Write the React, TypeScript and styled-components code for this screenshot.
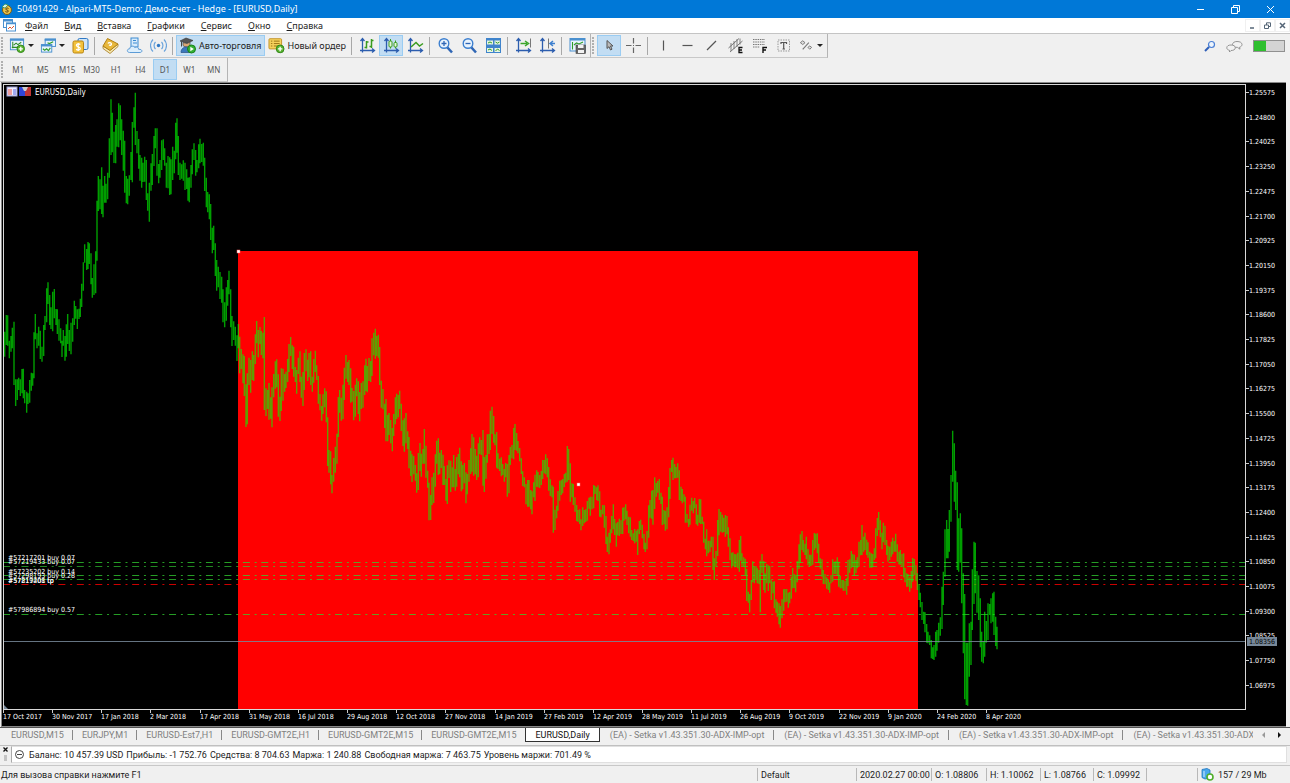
import React from 'react';
import styled, { createGlobalStyle, css } from 'styled-components';

const Global = createGlobalStyle`
  *, *::before, *::after { box-sizing: border-box; }
  body { margin: 0; background: #f0f0f0; }
  button, input { font: inherit; color: inherit; }
`;

const uiFont = `'Noto Sans', 'Open Sans', sans-serif`;
const denseFont = `Roboto, 'Noto Sans', sans-serif`;
const chartFont = `'DejaVu Sans Condensed', 'DejaVu Sans', sans-serif`;

const Window = styled.div`
  display: flex;
  flex-direction: column;
  min-height: 100vh;
  overflow: hidden;
  background: #f0f0f0;
  color: #1c1c1c;
  font: 9px/12px ${uiFont};
`;

const TitleBar = styled.header`
  display: flex;
  align-items: center;
  height: 18px;
  padding: 0 2px 0 1px;
  background: #0078d7;
  color: #fff;
`;

const TitleText = styled.h1`
  flex: 1;
  margin: 0 0 0 5px;
  font-size: 9px;
  font-weight: 400;
  white-space: nowrap;
`;

const CaptionButton = styled.button`
  display: grid;
  place-items: center;
  width: 35px;
  height: 18px;
  padding: 0;
  border: 0;
  background: transparent;
`;

const MenuBar = styled.nav`
  display: flex;
  align-items: center;
  height: 16px;
  padding-left: 3px;
  background: #fff;
  border-bottom: 1px solid #c4c4c4;
`;

const MenuItems = styled.div`
  display: flex;
  flex: 1;
  gap: 16px;
  margin-left: 9px;
`;

const MenuButton = styled.button`
  padding: 0;
  border: 0;
  background: transparent;
  white-space: nowrap;
  &::first-letter { text-decoration: underline; }
`;

const DocButton = styled.button`
  display: grid;
  place-items: center;
  width: 15px;
  height: 13px;
  padding: 0;
  border: 1px solid #f0f0f0;
  background: #fff;
`;

const ToolRow = styled.div`
  display: flex;
  align-items: stretch;
  height: 24px;
`;

const ToolGroup = styled.div`
  display: flex;
  align-items: center;
  height: 24px;
  padding-right: 1px;
  border-right: 1px solid #b4b4b4;
  border-bottom: 1px solid #c8c8c8;
`;

const Grip = styled.span`
  width: 6px;
  height: 18px;
  background: radial-gradient(circle at 2px 1px, #b0b0b0 1px, transparent 1px) 0 0 / 6px 3px;
`;

const Divider = styled.span`
  width: 1px;
  height: 18px;
  margin: 0 3px 0 2px;
  background: #a8a8a8;
`;

const activeLook = css`
  background: #c2ddf3;
  border-color: #9accf2;
`;

const ToolButton = styled.button<{ $active?: boolean; $width?: number }>`
  display: flex;
  align-items: center;
  justify-content: ${p => (p.$width ? 'flex-start' : 'center')};
  gap: 3px;
  width: ${p => p.$width ?? 24}px;
  height: 21px;
  padding: 0 2px;
  border: 1px solid transparent;
  background: transparent;
  white-space: nowrap;
  ${p => p.$active && activeLook}
`;

const Caret = styled.span`
  border: 3px solid transparent;
  border-top-color: #222;
  border-bottom: 0;
`;

const RightTools = styled.div`
  display: flex;
  align-items: center;
  gap: 10px;
  margin-left: auto;
  padding-right: 5px;
`;

const IconOnly = styled.button`
  display: grid;
  place-items: center;
  padding: 0;
  border: 0;
  background: transparent;
`;

const Meter = styled.div`
  width: 32px;
  height: 12px;
  border: 1px solid #909090;
  background: linear-gradient(90deg, #2ebf2e 40%, #d4d4d4 40%);
`;

const PeriodGroup = styled.div`
  display: grid;
  grid-template-columns: repeat(9, 1fr);
  width: 220px;
`;

const PeriodButton = styled.button<{ $active?: boolean }>`
  height: 21px;
  padding: 0;
  border: 1px solid transparent;
  background: transparent;
  color: #555;
  font: 8px/10px ${uiFont};
  ${p => p.$active && activeLook}
`;

const ChartPane = styled.main`
  display: grid;
  flex: 1;
  grid-template-columns: 1fr 40px;
  grid-template-rows: 1fr 16px;
  margin: 0 4px 0 1px;
  min-height: 645px;
  border: 1px solid #888;
  border-right: 0;
  background: #000;
  padding: 1px 0 0 1px;
`;

const Plot = styled.div`
  display: grid;
  min-width: 0;
  border: 1px solid #d8d8d8;
`;

const Drawing = styled.svg`
  display: block;
  width: 100%;
  height: 100%;
  min-width: 0;
  font: 7px ${chartFont};
`;

const TabStrip = styled.div`
  display: flex;
  align-items: stretch;
  height: 19px;
  border-top: 1px solid #555;
  border-bottom: 1px solid #c0c0c0;
`;

const Tabs = styled.div`
  display: flex;
  flex: 1;
  align-items: flex-start;
  min-width: 0;
  overflow: hidden;
  padding-left: 2px;
`;

const Tab = styled.button<{ $active?: boolean; $rule?: boolean; $roomy?: boolean }>`
  position: relative;
  flex: none;
  height: 14px;
  padding: 0 ${p => (p.$roomy ? 9 : 8)}px;
  border: 1px solid transparent;
  border-top: 0;
  background: transparent;
  color: #808080;
  font-family: ${denseFont};
  line-height: 14px;
  white-space: nowrap;
  ${p => p.$rule && css`
    &::after {
      content: '';
      position: absolute;
      right: -1px;
      top: 2px;
      height: 10px;
      border-right: 1px solid #888;
    }
  `}
  ${p => p.$active && css`
    border-color: #333;
    background: #fff;
    color: #111;
  `}
`;

const TabArrows = styled.div`
  display: flex;
  align-items: center;
  gap: 13px;
  padding: 0 9px 3px;
`;

const Arrow = styled.button<{ $back?: boolean }>`
  width: 0;
  height: 0;
  padding: 0;
  border: 3px solid transparent;
  background: transparent;
  ${p => (p.$back
    ? css`border-left-width: 0; border-right-color: #999;`
    : css`border-right-width: 0; border-left-color: #111;`)}
`;

const AccountRow = styled.section`
  display: flex;
  height: 20px;
  padding-right: 3px;
  border-bottom: 1px solid #c8c8c8;
`;

const AccountSide = styled.div`
  display: flex;
  flex-direction: column;
  align-items: center;
  gap: 3px;
  width: 11px;
  padding-top: 1px;
`;

const SideGrip = styled.span`
  width: 3px;
  height: 6px;
  background: #c4c4c4;
`;

const AccountLine = styled.p`
  display: flex;
  flex: 1;
  align-items: center;
  gap: 5px;
  height: 17px;
  margin: 0;
  padding: 0 3px;
  border: 1px solid #e0e0e0;
  border-left-color: #aaa;
  background: #fff;
  font-family: ${denseFont};
  white-space: nowrap;
`;

const Figures = styled.span`
  display: flex;
  gap: 3px;
`;

const StatusBar = styled.footer`
  display: flex;
  align-items: center;
  height: 17px;
  font-family: ${denseFont};
`;

const StatusHint = styled.span`
  flex: 1;
  padding-left: 1px;
`;

const StatusCell = styled.span<{ $width: number }>`
  display: flex;
  align-items: center;
  gap: 4px;
  width: ${p => p.$width}px;
  height: 13px;
  padding-left: 3px;
  border-left: 1px solid #b8b8b8;
  white-space: nowrap;
`;

/* ---------- icons ---------- */

const Icon = ({ children, w = 17 }: { children: React.ReactNode; w?: number }) => (
  <svg width={w} height={17} viewBox={`0 0 ${w} 17`} fill="none" aria-hidden>{children}</svg>
);

const Plus = ({ x, y }: { x: number; y: number }) => (
  <g>
    <circle cx={x} cy={y} r="4" fill="#5cb531" stroke="#2f8418" />
    <path d={`M${x - 2.3} ${y}h4.6M${x} ${y - 2.3}v4.6`} stroke="#fff" strokeWidth="1.4" />
  </g>
);

const Axes = () => (
  <path d="M3.5 1.5v14M1 13.5h14M1.500 4l2-2.500 2 2.500M13 11.500l2.500 2-2.500 2" stroke="#2c5dae" strokeWidth="1.300" />
);

const icons = {
  newChart: (
    <Icon>
      <rect x="1.500" y="1.500" width="14" height="11.500" fill="#e9f4fd" stroke="#4a90cf" />
      <path d="M1 2.500h15" stroke="#4a90cf" strokeWidth="2" />
      <path d="M4 4.500v7M3 10.500h9M5 8l2.500-2 2 1.500L13 5" stroke="#2f8c2a" strokeWidth="1.100" />
      <Plus x={12.5} y={12} />
    </Icon>
  ),
  profiles: (
    <Icon>
      <rect x="5.500" y="1.500" width="11" height="8" fill="#e9f4fd" stroke="#4a90cf" />
      <path d="M5 2.500h12" stroke="#4a90cf" strokeWidth="2" />
      <rect x="1.500" y="7.500" width="11" height="8" fill="#e9f4fd" stroke="#4a90cf" />
      <path d="M1 8.500h12" stroke="#4a90cf" strokeWidth="2" />
      <path d="M3 12l2 1.500L7 12l2 2 2-3M8 5.500l2 1 4-2" stroke="#2f9c2a" strokeWidth="1.200" />
    </Icon>
  ),
  symbols: (
    <Icon>
      <rect x="6" y="1.500" width="10" height="11" rx="1.500" fill="#cfe5f8" stroke="#2f78c4" />
      <rect x="1" y="4" width="10.500" height="12" rx="1.500" fill="#f2c13c" stroke="#b98512" />
      <path d="M8.300 7.500c-1-1-4-1-4 .8s4 1.400 4 3.200-3 1.800-4.200.7M6.200 6v8" stroke="#fff" strokeWidth="1.200" />
    </Icon>
  ),
  book: (
    <Icon>
      <path d="M1 9v2.500l7 5L16 9.500V7l-8 6z" fill="#f7e9b4" stroke="#a4791a" strokeWidth=".8" />
      <path d="M1 9L5.500 1.500 16 7l-8 6.500z" fill="#e8b83c" stroke="#b07f14" />
      <path d="M6 6.500c.8-1.500 3-1 3.400.2s-1 2-2.400 1.300" stroke="#fff" strokeWidth="1.300" />
    </Icon>
  ),
  cloud: (
    <Icon>
      <rect x="5" y="1" width="7" height="9" fill="#d7ebfb" stroke="#3c8bd2" />
      <path d="M7 3.500h3M7 6h4" stroke="#3c8bd2" />
      <path d="M3.500 15.500c-3-.3-2.800-3.700.2-3.700.3-3 4-3.500 5-1.300 2-1.200 4 .1 3.900 1.800 4-.3 4.200 2.900 1.500 3.200z" fill="#dceefc" stroke="#5c9bd6" />
    </Icon>
  ),
  signal: (
    <Icon>
      <circle cx="8.500" cy="8.500" r="1.700" fill="#2f78c4" />
      <path d="M5.500 5a5 5 0 000 7M11.500 5a5 5 0 010 7M3 2.500a8.500 8.500 0 000 12M14 2.500a8.500 8.500 0 010 12" stroke="#6ba4dc" strokeWidth="1.200" />
    </Icon>
  ),
  auto: (
    <Icon>
      <path d="M1 4l6-3 7 2.500L8 6.500z" fill="#555" stroke="#333" strokeWidth=".6" />
      <path d="M4 5.500v3c2 2 6 2 7-.5V5L8 6.500z" fill="#dca874" stroke="#444" strokeWidth=".7" />
      <path d="M2 15.500c0-4 3-5.500 5-5.500s5 1 5.500 5.500z" fill="#3b78bd" stroke="#284f85" strokeWidth=".7" />
      <path d="M2.500 4.500v5" stroke="#444" />
      <circle cx="12.500" cy="12" r="4" fill="#35b035" stroke="#17821a" />
      <path d="M11.300 9.700v4.600l3.500-2.300z" fill="#fff" />
    </Icon>
  ),
  order: (
    <Icon>
      <rect x="1" y="1.500" width="13" height="10.500" rx="1" fill="#f6d25c" stroke="#c4952a" />
      <path d="M3 4h1.500M6 4h6M3 6.500h1.500M6 6.500h6M3 9h1.500M6 9h4" stroke="#9a7415" />
      <Plus x={12.5} y={12} />
    </Icon>
  ),
  bars: <Icon><Axes /><path d="M7.500 4v7.500M5.500 10.500h2M7.500 5h2M12.500 2v9M10.500 9.500h2M12.500 3.500h2" stroke="#3a9c1f" strokeWidth="1.500" /></Icon>,
  candles: (
    <Icon><Axes /><path d="M7.500 2v9.500M12.500 3.500v8" stroke="#3a9c1f" />
      <rect x="6" y="4" width="3" height="6" rx="1" fill="#e6f7dc" stroke="#3a9c1f" /><rect x="11" y="5.500" width="3" height="4.500" rx="1" fill="#e6f7dc" stroke="#3a9c1f" /></Icon>
  ),
  line: <Icon><Axes /><path d="M4 10l5-4.500L12.500 9 16 6.500" stroke="#3a9c1f" strokeWidth="1.500" /></Icon>,
  zoomIn: (
    <Icon><path d="M10 10l5 5.500" stroke="#2f66b5" strokeWidth="2.600" /><circle cx="7" cy="6.500" r="4.800" fill="#e8f3fd" stroke="#3c7fcf" strokeWidth="1.400" />
      <path d="M4.500 6.500h5M7 4v5" stroke="#2f66b5" strokeWidth="1.300" /></Icon>
  ),
  zoomOut: (
    <Icon><path d="M10 10l5 5.500" stroke="#2f66b5" strokeWidth="2.600" /><circle cx="7" cy="6.500" r="4.800" fill="#e8f3fd" stroke="#3c7fcf" strokeWidth="1.400" />
      <path d="M4.500 6.500h5" stroke="#2f66b5" strokeWidth="1.300" /></Icon>
  ),
  tile: (
    <Icon>
      <rect x="1" y="1" width="15" height="15" fill="#3f84cc" />
      <path d="M2 3.500h6v4H2zM9.500 3.500h5.500v4H9.500zM2 11h6v4H2zM9.500 11h5.500v4H9.500z" fill="#e8f6e0" />
      <path d="M3 6l2-1 2 1M10.500 5l2 1.200 2-1.200M3 13l2-1 2 1.500M10.500 14l2-2 2 1.500" stroke="#2f9c2a" />
    </Icon>
  ),
  scroll: <Icon><Axes /><path d="M15.500 1.500v9" stroke="#777" /><path d="M5.500 6.500H12M10 4l3.500 2.500L10 9" stroke="#3aa52a" strokeWidth="1.500" /></Icon>,
  shift: <Icon><Axes /><path d="M9.500 1.500v10" stroke="#777" /><path d="M16 6.500h-4M14 4l-3 2.500L14 9" stroke="#3c7fcf" strokeWidth="1.500" /></Icon>,
  template: (
    <Icon>
      <rect x="1" y="1.500" width="15" height="12.500" fill="#e9f4fd" stroke="#4a90cf" /><path d="M1 2.500h15" stroke="#4a90cf" strokeWidth="2" />
      <path d="M3.500 5v7.500M5 8l2.500-2L10 7l4-2" stroke="#2f9c2a" strokeWidth="1.100" />
      <rect x="7" y="8" width="9.500" height="8.500" fill="#666" stroke="#444" strokeWidth=".6" /><path d="M9 8h5.500v3H9zM9 13h6v3H9z" fill="#f2f2f2" />
    </Icon>
  ),
  cursor: <Icon><path d="M6 3.500v8l2-1.800 1.500 3.300 1.500-.8-1.500-3.200h2.500z" fill="#bbb" stroke="#555" /></Icon>,
  cross: <Icon><path d="M8.500 1v5.500M8.500 10.500v5.500M1 8.500h5.500M10.500 8.500H16M8 8.500h1" stroke="#666" strokeWidth="1.200" /></Icon>,
  vline: <Icon><path d="M8.500 3.500v10" stroke="#555" strokeWidth="1.200" /></Icon>,
  hline: <Icon><path d="M3.500 8.500h10" stroke="#555" strokeWidth="1.200" /></Icon>,
  trend: <Icon><path d="M4 13l9-9" stroke="#555" strokeWidth="1.200" /></Icon>,
  equi: (
    <Icon><path d="M1.500 11L12 1.500M3 15L15.500 4" stroke="#777" /><path d="M4 6v8M7 4v8M10 2v8M13 1.500v6" stroke="#777" strokeWidth=".9" />
      <path d="M15.500 10.500h-3.500v5h3.500M12 13h3" stroke="#111" strokeWidth="1.300" /></Icon>
  ),
  fibo: (
    <Icon><path d="M2 2.500h12M2 5h12M2 7.500h12M2 10h7" stroke="#777" strokeDasharray="1.500 .8" />
      <path d="M12 16v-5.500h4M12 13h3" stroke="#111" strokeWidth="1.400" /></Icon>
  ),
  text: <Icon><rect x="3" y="3" width="11.500" height="11" stroke="#999" strokeDasharray="1.500 1" /><path d="M6 7V5.500h5.500V7M8.700 5.500v6.500M7.500 12h2.500" stroke="#555" strokeWidth="1.200" /></Icon>,
  shapes: <Icon><path d="M5 12.500l6.500-7" stroke="#777" strokeWidth="1.200" /><path d="M2.500 5.500L5 3.500l2.500 2L5 7.500zM10.500 10.500l2-1.500 2 1.500-2 2z" fill="#ddd" stroke="#777" /></Icon>,
};

const AppLogo = () => (
  <svg width="11" height="12" viewBox="0 0 11 12">
    <circle cx="6" cy="7" r="4.500" fill="#e9c34a" stroke="#7c5c10" />
    <path d="M1 4l3-3 3 1-3 3z" fill="#d9efe0" stroke="#2c8f4c" strokeWidth=".7" />
    <path d="M7.500 5.500c-1-.8-3-.5-2.800.6s2.800.8 2.700 2-2 1.200-3 .4" fill="none" stroke="#5a4108" />
  </svg>
);

const DocLogo = () => (
  <svg width="13" height="13" viewBox="0 0 13 13" fill="none">
    <rect x=".5" y=".5" width="9" height="8" fill="#fff" stroke="#4a90cf" /><path d="M0 1.500h10" stroke="#4a90cf" strokeWidth="2" />
    <rect x="3.500" y="4" width="9" height="8" fill="#fff" stroke="#4a90cf" /><path d="M3 4.500h10" stroke="#4a90cf" strokeWidth="1.500" /><path d="M5 10l2-2 1.500 1.500L11 7" stroke="#e0562c" />
  </svg>
);

const SearchIcon = () => (
  <svg width="12" height="12" viewBox="0 0 12 12" fill="none">
    <path d="M5 7L1 11" stroke="#2f5fb8" strokeWidth="2" /><circle cx="7.500" cy="4.500" r="3" fill="#eef5fd" stroke="#4a7fd4" strokeWidth="1.200" />
  </svg>
);

const ChatIcon = () => (
  <svg width="17" height="13" viewBox="0 0 17 13" fill="#f2f2f2" stroke="#8a8a8a" strokeWidth=".9">
    <path d="M11 1.500c3 0 5 1.200 5 3 0 1.300-1 2.300-2.500 2.700l.5 2-2.500-1.800C8.500 7.500 6.500 6.300 6.500 4.500s2-3 4.500-3z" />
    <path d="M5 5c2.500 0 4.300 1 4.300 2.800S7.500 10.500 5 10.500L3.500 12v-1.700C1.800 10 .8 9 .8 7.800.8 6 2.500 5 5 5z" />
  </svg>
);

const ServerIcon = () => (
  <svg width="13" height="13" viewBox="0 0 13 13">
    <path d="M1 1.500l5-1 3 1.500v8l-5 1-3-1.500z" fill="#4aa8ec" stroke="#1f74bd" strokeWidth=".8" />
    <path d="M3 3l.01 6" stroke="#d2ecff" /><circle cx="9" cy="9" r="3" fill="#fff" stroke="#4fae2a" strokeWidth="1.600" />
  </svg>
);

/* ---------- chart data ---------- */

/* Each run: origin of the run in the plot, then x/high/low triplets at three units per pixel. */
const runs: { ox: number; oy: number; bars: string }[] = [
  {
    ox: -4, oy: -5,
    bars: `14 755 830,19 705 795,23 706 797,28 782 835,33 768 815,37 743 805,42 725 915,47 898 978,52 898 960,56 893 930,61 898 948,66 867 940,70 866 955,74 930 970,80 935 998,84 940 972,89 900 968,94 878 932,98 880 917,102 757 895,106 702 778,111 760 805,116 740 797,121 752 837,126 800 845,131 735 828,135 708 750,140 625 727,144 607 672,149 645 735,153 682 747,158 635 754,163 627 715,168 687 735,172 688 762,177 718 782,182 745 790,186 782 831,190 750 797,195 768 842,199 733 830,203 702 792,208 750 813,213 728 823,218 715 785,223 662 735,227 678 716,232 688 747,237 686 717,241 656 711,245 611 681,250 547 632,254 493 548,260 507 570,264 486 567,268 490 552,273 520 613,277 594 653,282 553 645,287 514 640,291 362 542,295 288 393,300 298 388,305 262 402,309 317 412,314 288 368,318 311 368,323 278 358,328 175 293,333 58 225,337 98 217,342 155 249,347 135 250,351 118 200,356 70 202,361 76 181,365 118 225,370 152 272,374 182 338,379 288 370,383 296 373,388 286 347,393 216 300,397 126 307,402 82 143,406 38 195,411 153 220,416 177 266,420 225 302,425 233 323,429 248 306,434 230 305,439 240 360,443 340 392,448 308 425,453 250 332,457 222 315,462 168 258,466 145 205,471 145 287,476 252 310,480 240 293,485 181 270,490 178 240,494 205 257,499 248 323,504 228 325,509 232 345,513 238 343,518 200 300,523 212 280,527 128 238,531 115 218,535 168 285,540 248 300,545 253 296,550 241 302,555 248 330,560 268 327,564 293 362,568 292 367,573 255 323,577 208 283,582 190 240,587 210 287,591 240 277,596 193 265,600 176 250,605 192 246,610 188 257,614 233 333,619 293 382,623 336 397,628 343 418,632 372 480,637 443 520,641 437 510,646 490 588,650 540 632,655 560 622,660 576 657,665 590 668,669 628 727,674 667 742,679 622 722,683 600 677,687 572 643,692 628 742,696 708 798,701 724 780,706 740 797,711 766 843,715 732 805`,
  },
  {
    ox: 226, oy: 215,
    bars: `29 110 220,34 147 207,39 163 250,43 168 288,48 253 381,52 220 373,57 173 255,62 180 278,67 154 240,71 165 243,76 103 192,80 63 130,85 90 172,90 81 132,94 93 165,99 98 175,103 51 330,108 265 348,113 270 327,117 249 359,122 292 356,126 262 382,131 222 292,136 184 266,140 178 262,145 223 350,150 290 363,154 205 333,159 206 302,164 222 275,168 215 264,173 177 246,177 132 216,182 111 168,187 136 207,191 140 230,196 201 246,200 210 281,205 173 222,210 154 246,214 230 293,219 216 318,223 159 270,228 148 214,233 179 243,237 159 232,242 154 255,247 230 275,251 177 248,256 152 216,260 196 240,265 228 311,270 282 331,275 318 362,279 283 342,284 265 322,289 274 367,293 352 498,297 450 518,302 454 553,306 525 580,311 474 545,316 440 518,321 401 491,325 291 411,329 270 338,334 293 362,339 254 358,343 203 300,348 165 236,353 186 246,357 180 255,362 205 308,366 264 305,371 273 361,376 254 350,380 235 289,385 244 342,389 276 364,394 249 327,399 244 323,404 196 285,408 176 273,412 198 277,417 174 243,422 183 246,426 115 228,431 98 166,436 86 176,440 108 168,445 104 173,449 141 255,454 242 323,459 267 328,464 311 384,468 297 424,473 345 424,477 339 405,482 360 430,487 384 454,491 342 408,496 292 373,500 281 357,505 285 352,509 272 327,514 311 393,519 361 438,523 355 455,528 339 430,533 394 447,537 411 505,542 452 528,546 463 546,551 468 523,556 495 542,560 520 578,565 459 570,570 429 513,574 461 530,579 447 491,583 387 491,588 437 533,593 512 563,597 548 661,602 585 660,606 532 615,611 518 609,616 463 560,620 422 491,625 415 525,629 458 522,634 450 504,639 464 555,643 498 555,648 537 602,652 496 612,657 481 534,662 482 576,667 502 562,671 465 562,676 507 572,680 471 560,685 462 523,689 443 532,694 484 574,698 495 568,703 489 550,708 517 610,712 522 583,717 480 545,722 445 522,726 402 515,731 412 527,736 447 523,740 467 540,745 430 532,749 412 462,754 420 465,759 390 557,763 471 576,768 465 536,772 403 488,777 402 462`,
  },
  {
    ox: 476, oy: 305,
    bars: `31 62 180,36 50 132,41 78 158,45 133 166,50 126 233,54 190 237,59 206 243,64 202 259,68 222 255,73 237 275,77 219 262,82 222 320,87 195 310,91 171 225,96 165 205,101 114 208,105 102 180,110 129 182,114 153 190,119 174 214,124 205 252,128 244 288,133 262 292,138 282 343,143 270 350,147 270 350,152 300 358,156 304 373,161 277 322,165 254 333,170 241 290,174 246 292,179 255 294,184 243 285,188 210 267,193 210 250,197 193 253,202 205 262,206 231 302,211 268 318,216 286 322,220 290 428,225 359 420,230 347 385,234 303 362,239 272 332,244 271 315,248 267 310,253 252 291,257 248 278,262 168 275,266 177 270,271 220 335,276 280 322,280 282 345,285 322 365,290 345 393,294 360 396,299 358 402,303 388 421,308 352 408,313 360 400,317 358 396,322 333 392,327 323 356,331 320 377,336 320 358,341 285 355,345 288 312,350 292 330,354 286 333,359 304 380,363 359 382,368 345 373,373 346 413,378 378 462,382 440 486,387 428 493,391 418 458,395 378 430,400 343 418,404 387 435,409 400 470,413 396 436,418 386 438,423 391 432,428 353 432,432 352 392,437 343 388,441 362 405,446 380 430,451 382 440,455 420 450,460 430 453,464 417 460,469 422 455,473 418 495,478 393 432,482 389 420,487 404 445,492 432 478,496 458 486,501 423 478,506 346 443,510 330 383,515 302 386,519 300 404,524 262 357,529 279 320,533 273 308,538 267 330,543 308 342,547 320 405,552 360 403,556 363 422,561 352 418,566 291 382,570 234 327,575 210 246,579 203 270,584 222 265,588 231 265,593 220 263,598 241 330,603 290 333,607 297 340,612 313 335,616 320 398,621 372 398,626 387 411,630 344 404,635 323 362,640 333 370,644 324 355,649 343 403,653 374 407,658 327 398,662 328 402,667 380 402,671 395 458,676 446 478,680 418 499,685 452 490,690 452 486,694 440 472,699 440 540,703 505 570,708 483 530,713 390 498,717 357 436,722 366 425,727 374 428,731 383 426,736 375 440,741 378 433,745 412 470,750 445 510,755 488 533,759 487 528,764 492 532,768 493 530,773 488 535,778 450 545`,
  },
  {
    ox: 696, oy: 355,
    bars: `122 288 362,126 340 377,131 352 380,136 356 405,140 387 483,145 455 488,149 462 517,154 420 480,158 364 427,163 380 430,168 378 420,172 385 430,177 390 432,181 362 517,186 342 400,191 363 450,195 400 458,200 372 430,205 376 453,209 378 430,214 421 480,219 425 460,223 424 505,228 478 518,232 485 530,237 490 553,241 498 563,246 478 535,251 448 512,255 447 487,260 447 485,265 458 503,269 456 490,274 410 476,278 384 445,283 402 444,287 405 457,292 363 427,297 313 387,301 283 368,306 273 330,310 300 337,315 311 345,319 290 358,324 327 376,329 344 378,333 344 378,338 300 374,343 279 330,347 281 325,352 280 340,356 311 368,361 355 386,366 358 410,370 390 432,375 402 433,380 412 446,385 420 450,389 427 458,393 405 430,398 358 425,403 365 402,407 364 403,412 352 405,416 365 440,421 408 445,426 420 445,430 420 452,435 423 452,440 415 464,444 360 438,449 358 398,454 333 385,458 342 380,463 344 408,468 360 400,472 352 385,477 305 380,482 300 346,486 255 345,491 290 335,495 278 330,500 299 345,504 307 353,509 335 383,514 340 383,518 342 382,523 325 360,527 265 355,532 234 288,536 216 270,541 241 292,546 278 328,550 248 307,555 257 315,560 300 345,564 317 365,569 320 360,574 305 350,578 293 343,583 303 335,587 281 335,592 313 365,597 335 373,601 330 375,606 342 380,611 340 412,615 384 427,620 400 440,624 402 440,629 412 455,634 393 445,638 354 425,643 357 405,648 376 422,652 400 450,657 432 480,661 458 502,666 486 540,671 515 552,675 517 577,680 552 608,684 575 610,689 586 615,694 600 655,698 622 657,702 615 660,707 575 650,711 570 632,716 548 608,721 532 587,726 440 567,730 395 495,735 268 410,740 240 355,744 267 355,748 210 335,753 105 245,758 -28 125,763 10 185,767 92 210,772 127 390,776 235 395,781 220 368,785 265 490,790 400 640,794 462 778,799 608 795,803 608 797,808 550 710,813 545 675,817 388 570,822 305 492,826 308 460,831 393 518,836 406 540,841 475 622,845 575 665,850 603 670,854 515 650,859 543 608,864 490 600,869 492 525,873 475 550,878 460 545,882 455 585,887 530 618,891 560 628`,
  },
];

const barPath = runs
  .map(({ ox, oy, bars }) =>
    bars
      .split(',')
      .map(b => {
        const [x, hi, lo] = b.trim().split(' ').map(Number);
        return `M${(ox + x / 3).toFixed(2)} ${(oy + hi / 3).toFixed(1)}V${(oy + lo / 3).toFixed(1)}`;
      })
      .join(''),
  )
  .join('');

const dates = ['17 Oct 2017', '30 Nov 2017', '17 Jan 2018', '2 Mar 2018', '17 Apr 2018', '31 May 2018', '16 Jul 2018',
  '29 Aug 2018', '12 Oct 2018', '27 Nov 2018', '14 Jan 2019', '27 Feb 2019', '12 Apr 2019', '28 May 2019',
  '11 Jul 2019', '26 Aug 2019', '9 Oct 2019', '22 Nov 2019', '9 Jan 2020', '24 Feb 2020', '8 Apr 2020'];

const BARS_PER_DATE = 32;
const BAR_STEP = 1.536;

const topPrice = 1.25575;
const prices = Array.from({ length: 25 }, (_, i) => (topPrice - i * 0.00775).toFixed(5)).filter(p => Number(p) > 1.069);
const priceY = (i: number) => Math.round(8 + i * 24.7);

const levels = [
  { y: 477, color: '#32d232', strength: 0.75 },
  { y: 481, color: '#32d232', strength: 0.65 },
  { y: 490, color: '#32d232', strength: 0.75 },
  { y: 494, color: '#32d232', strength: 0.7 },
  { y: 499, color: '#ff0000', strength: 0.8 },
  { y: 529, color: '#32d232', strength: 0.75 },
];

const orders = [
  { y: 475, text: '#57217201 buy 0.07' },
  { y: 479, text: '#57219433 buy 0.07' },
  { y: 489, text: '#57235202 buy 0.14' },
  { y: 493, text: '#57298193 buy 0.28' },
  { y: 498, text: '#57217201 tp' },
  { y: 498, text: '#57819408 tp' },
  { y: 527, text: '#57986894 buy 0.57' },
];

const Handle = ({ x, y }: { x: number; y: number }) => (
  <rect x={x - 1} y={y - 1} width="3" height="3" fill="#fff" stroke="#f66" strokeWidth=".5" />
);

const PlotDrawing = () => (
  <Drawing role="img" aria-label="EURUSD, Daily">
    <rect x="234" y="166" width="680" height="100%" fill="#f00" />
    {levels.map(l => (
      <line key={l.y} x1="-1" x2="100%" y1={l.y + 0.5} y2={l.y + 0.5} stroke={l.color} strokeOpacity={l.strength} strokeDasharray="7 4.800 2 4.650" />
    ))}
    <path d={barPath} stroke="#0f0" strokeWidth="1.400" strokeOpacity=".62" fill="none" />
    <line x1="0" x2="100%" y1="556.500" y2="556.500" stroke="#778899" strokeOpacity=".85" />
    <Handle x={234} y={166} />
    <Handle x={574} y={399} />
    <g fill="#fff">
      {orders.map(o => <text key={o.text} x="4" y={o.y}>{o.text}</text>)}
      <text x="31" y="10" fontSize="8">EURUSD,Daily</text>
    </g>
    <rect x="3" y="2" width="10" height="9" fill="#eef" stroke="#99c" />
    <rect x="4" y="4" width="4" height="6" fill="#f0a0a0" /><rect x="9" y="4" width="3" height="6" fill="#a0a8f0" />
    <rect x="15" y="2" width="6" height="9" fill="#2f45d8" /><rect x="21" y="2" width="6" height="9" fill="#c03434" />
    <path d="M18 2h6l-2 4h-2z" fill="#ccc" />
    <path d="M0 620l4 4H0z" fill="#778899" />
  </Drawing>
);

const PriceAxis = () => (
  <Drawing role="img" aria-label="Price scale">
    {prices.map((p, i) => (
      <g key={p}>
        <path d={`M0 ${priceY(i) + 0.5}h3`} stroke="#ccc" />
        <text x="3" y={priceY(i) + 3} fill="#fff">{p}</text>
      </g>
    ))}
    <rect x="1" y="553" width="30" height="9" fill="#778899" />
    <text x="3" y="560" fill="#000">1.08356</text>
  </Drawing>
);

const DateAxis = () => (
  <Drawing role="img" aria-label="Date scale">
    {dates.map((d, i) => {
      const x = Math.round(i * BARS_PER_DATE * BAR_STEP);
      return (
        <g key={d}>
          <path d={`M${x + 0.5} 0v3`} stroke="#ccc" />
          <text x={x} y="9" fill="#fff">{d}</text>
        </g>
      );
    })}
  </Drawing>
);

/* ---------- page ---------- */

const menus = ['Файл', 'Вид', 'Вставка', 'Графики', 'Сервис', 'Окно', 'Справка'];
const periods = ['M1', 'M5', 'M15', 'M30', 'H1', 'H4', 'D1', 'W1', 'MN'];
const ea = '(EA) - Setka v1.43.351.30-ADX-IMP-opt';
const tabs = ['EURUSD,M15', 'EURJPY,M1', 'EURUSD-Est7,H1', 'EURUSD-GMT2E,H1', 'EURUSD-GMT2E,M15', 'EURUSD-GMT2E,M15', 'EURUSD,Daily', ea, ea, ea, ea];
const ACTIVE_TAB = 6;
const account = ['Баланс: 10 457.39 USD', 'Прибыль: -1 752.76', 'Средства: 8 704.63', 'Маржа: 1 240.88', 'Свободная маржа: 7 463.75', 'Уровень маржи: 701.49 %'];

const Tool = ({ icon, label, active }: { icon: keyof typeof icons; label: string; active?: boolean }) => (
  <ToolButton aria-label={label} $active={active}>{icons[icon]}</ToolButton>
);

const DropTool = ({ icon, label }: { icon: keyof typeof icons; label: string }) => (
  <ToolButton aria-label={label} $width={31}>{icons[icon]}<Caret /></ToolButton>
);

export default function App() {
  return (
    <Window>
      <Global />
      <TitleBar>
        <AppLogo />
        <TitleText>50491429 - Alpari-MT5-Demo: Демо-счет - Hedge - [EURUSD,Daily]</TitleText>
        <CaptionButton aria-label="Свернуть"><svg width="9" height="9"><path d="M1 4.500h7" stroke="#fff" /></svg></CaptionButton>
        <CaptionButton aria-label="Восстановить">
          <svg width="9" height="9" fill="none" stroke="#fff"><path d="M.5 2.500h6v6h-6zM2.500 2.500v-2h6v6h-2" /></svg>
        </CaptionButton>
        <CaptionButton aria-label="Закрыть"><svg width="9" height="9"><path d="M1 1l7 7M8 1L1 8" stroke="#fff" /></svg></CaptionButton>
      </TitleBar>

      <MenuBar>
        <DocLogo />
        <MenuItems>{menus.map(m => <MenuButton key={m}>{m}</MenuButton>)}</MenuItems>
        <DocButton aria-label="Свернуть окно"><svg width="7" height="7"><path d="M1 6h4" stroke="#567" strokeWidth="1.500" /></svg></DocButton>
        <DocButton aria-label="Восстановить окно">
          <svg width="7" height="7" fill="none" stroke="#567"><path d="M.5 3h4v3.500h-4zM2.500 3V.8h4V4.500h-2" /></svg>
        </DocButton>
        <DocButton aria-label="Закрыть окно"><svg width="7" height="7"><path d="M1 1l5 5M6 1L1 6" stroke="#567" strokeWidth="1.500" /></svg></DocButton>
      </MenuBar>

      <ToolRow>
        <ToolGroup>
          <Grip />
          <DropTool icon="newChart" label="Новый график" />
          <DropTool icon="profiles" label="Профили" />
          <Tool icon="symbols" label="Символы" />
          <Divider />
          <Tool icon="book" label="Маркет" />
          <Tool icon="cloud" label="Хостинг" />
          <Tool icon="signal" label="Сигналы" />
          <Divider />
          <ToolButton $width={89} $active>{icons.auto}Авто-торговля</ToolButton>
          <ToolButton $width={84}>{icons.order}Новый ордер</ToolButton>
          <Divider />
          <Tool icon="bars" label="Бары" />
          <Tool icon="candles" label="Свечи" active />
          <Tool icon="line" label="Линия" />
          <Divider />
          <Tool icon="zoomIn" label="Увеличить" />
          <Tool icon="zoomOut" label="Уменьшить" />
          <Tool icon="tile" label="Окна мозаикой" />
          <Divider />
          <Tool icon="scroll" label="Автопрокрутка" />
          <Tool icon="shift" label="Сдвиг графика" />
          <Divider />
          <Tool icon="template" label="Шаблоны" />
        </ToolGroup>
        <ToolGroup>
          <Grip />
          <Tool icon="cursor" label="Курсор" active />
          <Tool icon="cross" label="Перекрестие" />
          <Divider />
          <Tool icon="vline" label="Вертикальная линия" />
          <Tool icon="hline" label="Горизонтальная линия" />
          <Tool icon="trend" label="Трендовая линия" />
          <Tool icon="equi" label="Канал" />
          <Tool icon="fibo" label="Фибоначчи" />
          <Tool icon="text" label="Текст" />
          <DropTool icon="shapes" label="Объекты" />
        </ToolGroup>
        <RightTools>
          <IconOnly aria-label="Поиск"><SearchIcon /></IconOnly>
          <IconOnly aria-label="Чат"><ChatIcon /></IconOnly>
          <Meter />
        </RightTools>
      </ToolRow>

      <ToolRow>
        <ToolGroup>
          <Grip />
          <PeriodGroup>{periods.map(p => <PeriodButton key={p} $active={p === 'D1'}>{p}</PeriodButton>)}</PeriodGroup>
        </ToolGroup>
      </ToolRow>

      <ChartPane>
        <Plot><PlotDrawing /></Plot>
        <PriceAxis />
        <DateAxis />
      </ChartPane>

      <TabStrip>
        <Tabs>
          {tabs.map((t, i) => (
            <Tab
              key={i}
              $active={i === ACTIVE_TAB}
              $roomy={i >= ACTIVE_TAB}
              $rule={i !== ACTIVE_TAB && i !== ACTIVE_TAB - 1}
            >
              {t}
            </Tab>
          ))}
        </Tabs>
        <TabArrows><Arrow $back aria-label="Назад" /><Arrow aria-label="Вперёд" /></TabArrows>
      </TabStrip>

      <AccountRow>
        <AccountSide>
          <svg width="5" height="5"><path d="M.5 .5l4 4M4.500 .5l-4 4" stroke="#111" strokeWidth="1.300" /></svg>
          <SideGrip />
        </AccountSide>
        <AccountLine>
          <svg width="9" height="9" fill="none" stroke="#444"><circle cx="4.500" cy="4.500" r="4" /><path d="M2 4.500h5" /></svg>
          <Figures>{account.map(a => <span key={a}>{a}</span>)}</Figures>
        </AccountLine>
      </AccountRow>

      <StatusBar>
        <StatusHint>Для вызова справки нажмите F1</StatusHint>
        <StatusCell $width={99}>Default</StatusCell>
        <StatusCell $width={75}>2020.02.27 00:00</StatusCell>
        <StatusCell $width={55}>O: 1.08806</StatusCell>
        <StatusCell $width={54}>H: 1.10062</StatusCell>
        <StatusCell $width={53}>L: 1.08766</StatusCell>
        <StatusCell $width={53}>C: 1.09992</StatusCell>
        <StatusCell $width={51} />
        <StatusCell $width={93}><ServerIcon />157 / 29 Mb</StatusCell>
      </StatusBar>
    </Window>
  );
}
